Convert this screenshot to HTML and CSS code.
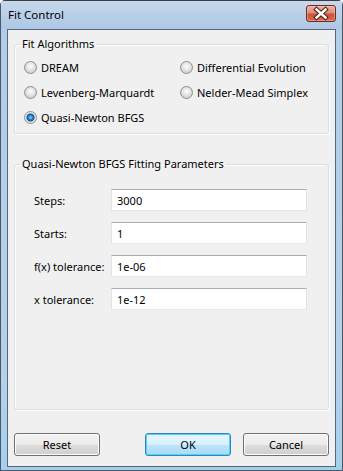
FILE: index.html
```html
<!DOCTYPE html>
<html lang="en">
<head>
    <meta charset="UTF-8">
    <meta name="viewport" content="width=device-width, initial-scale=1.0">
    <title>Fit Control</title>
    <link rel="stylesheet" href="styles.css">
</head>
<body>

    <div class="window">
        <div class="titlebar">
            <span class="title">Fit Control</span>
            <button class="close" title="Close">
                <svg width="28" height="15" viewBox="0 0 28 15">
                    <path d="M9.5 3.5 L18.5 11.5 M18.5 3.5 L9.5 11.5" stroke="#5b2219" stroke-width="4.6" stroke-linecap="square"/>
                    <path d="M9.5 3.5 L18.5 11.5 M18.5 3.5 L9.5 11.5" stroke="#ffffff" stroke-width="2.4" stroke-linecap="square"/>
                </svg>
            </button>
        </div>

        <div class="client">
            <fieldset class="group algos">
                <legend>Fit Algorithms</legend>
                <div class="radio-grid">
                    <label class="radio"><input type="radio" name="algo"> DREAM</label>
                    <label class="radio"><input type="radio" name="algo"> Differential Evolution</label>
                    <label class="radio"><input type="radio" name="algo"> Levenberg-Marquardt</label>
                    <label class="radio"><input type="radio" name="algo"> Nelder-Mead Simplex</label>
                    <label class="radio"><input type="radio" name="algo" checked> Quasi-Newton BFGS</label>
                </div>
            </fieldset>

            <fieldset class="group params">
                <legend>Quasi-Newton BFGS Fitting Parameters</legend>
                <div class="field-grid">
                    <label for="steps">Steps:</label>
                    <input id="steps" type="text" value="3000">
                    <label for="starts">Starts:</label>
                    <input id="starts" type="text" value="1">
                    <label for="ftol">f(x) tolerance:</label>
                    <input id="ftol" type="text" value="1e-06">
                    <label for="xtol">x tolerance:</label>
                    <input id="xtol" type="text" value="1e-12">
                </div>
            </fieldset>

            <div class="buttons">
                <button class="btn">Reset</button>
                <button class="btn default">OK</button>
                <button class="btn">Cancel</button>
            </div>
        </div>
    </div>

</body>
</html>
```

FILE: styles.css
```css
/* Windows 7 style dialog */
body {
    margin: 0;
    font-family: "Noto Sans", Arial, sans-serif;
    font-size: 11px;
    color: #000;
    background-color: #fff;
}

.window {
    width: 343px;
    height: 471px;
    box-sizing: border-box;
    border: 1px solid #4a5868;
    border-top-color: #3b3b3b;
    border-radius: 5px 5px 0 0;
    background: linear-gradient(#c4d7ec, #b3cce7 30px, #b6d0ea 80%, #a3d0ee);
    padding: 0 6px 3px 6px;
    display: flex;
    flex-direction: column;
}

.titlebar {
    height: 28px;
    display: flex;
    align-items: flex-start;
    justify-content: space-between;
    background: linear-gradient(#c6d8ec, #adc7e5);
    margin: 0 -6px;
    padding: 0 6px 0 7px;
}

.title {
    line-height: 28px;
    font-size: 11.5px;
}

.close {
    width: 30px;
    height: 17px;
    margin-top: 4px;
    padding: 0;
    border: 1px solid #6e2b21;
    border-radius: 3px;
    background: linear-gradient(#edb4a7, #dc8c78 45%, #c9523a 55%, #d76c50);
    box-shadow: inset 0 0 0 1px rgba(255, 200, 190, 0.45);
    display: flex;
    align-items: center;
    justify-content: center;
    cursor: pointer;
}

.client {
    flex: 1;
    border: 1px solid #56677a;
    background-color: #f0f0f0;
    padding: 0 6px 10px 6px;
    display: flex;
    flex-direction: column;
}

.group {
    margin: 0;
    padding: 0;
    border: 1px solid #d5dfe5;
    border-radius: 3px;
    box-shadow: inset 1px 1px 0 #fff, 1px 1px 0 #fff;
}

.group legend {
    margin-left: 5px;
    padding: 0 2px;
    line-height: 16px;
}

.algos {
    margin-top: 6px;
}

.params {
    margin-top: 22px;
    flex: 1;
}

.radio-grid {
    display: grid;
    grid-template-columns: 156px auto;
    grid-auto-rows: 25px;
    padding: 3px 0 3px 9px;
}

.radio {
    display: flex;
    align-items: center;
    gap: 4px;
}

.radio input {
    appearance: none;
    margin: 0;
    width: 13px;
    height: 13px;
    border-radius: 50%;
    border: 1px solid #8f8f8f;
    background: radial-gradient(circle at 50% 40%, #fdfdfd 0, #e4e4e4 45%, #d2d2d2 70%, #f4f4f4 100%);
    box-sizing: border-box;
}

.radio input:checked {
    background: radial-gradient(circle at 50% 50%, #8fd0f5 0, #2a8ad4 2px, #17538f 3.5px, #e0e0e0 4.5px, #f6f6f6 100%);
}

.field-grid {
    display: grid;
    grid-template-columns: 77px 196px;
    grid-auto-rows: 22px;
    row-gap: 11px;
    align-items: center;
    padding: 17px 0 0 19px;
}

.field-grid input {
    height: 22px;
    box-sizing: border-box;
    margin: 0;
    padding: 0 5px;
    font: inherit;
    border: 1px solid #e2e3ea;
    border-top-color: #abadb3;
    border-bottom-color: #e3e9ef;
    background-color: #fff;
}

.buttons {
    display: flex;
    gap: 12px;
    margin-top: 23px;
}

.btn {
    width: 86px;
    height: 23px;
    padding: 0;
    font: inherit;
    border: 1px solid #707070;
    border-radius: 3px;
    background: linear-gradient(#f2f2f2, #ebebeb 50%, #dddddd 50%, #cfcfcf);
    box-shadow: inset 0 0 0 1px #fcfcfc;
    cursor: pointer;
}

.btn.default {
    margin-left: auto;
    border-color: #3c7fb1;
    background: linear-gradient(#eaf6fd, #d9f0fc 50%, #bee6fd 50%, #a7d9f5);
    box-shadow: inset 0 0 0 1px #48d8fb;
}
```
